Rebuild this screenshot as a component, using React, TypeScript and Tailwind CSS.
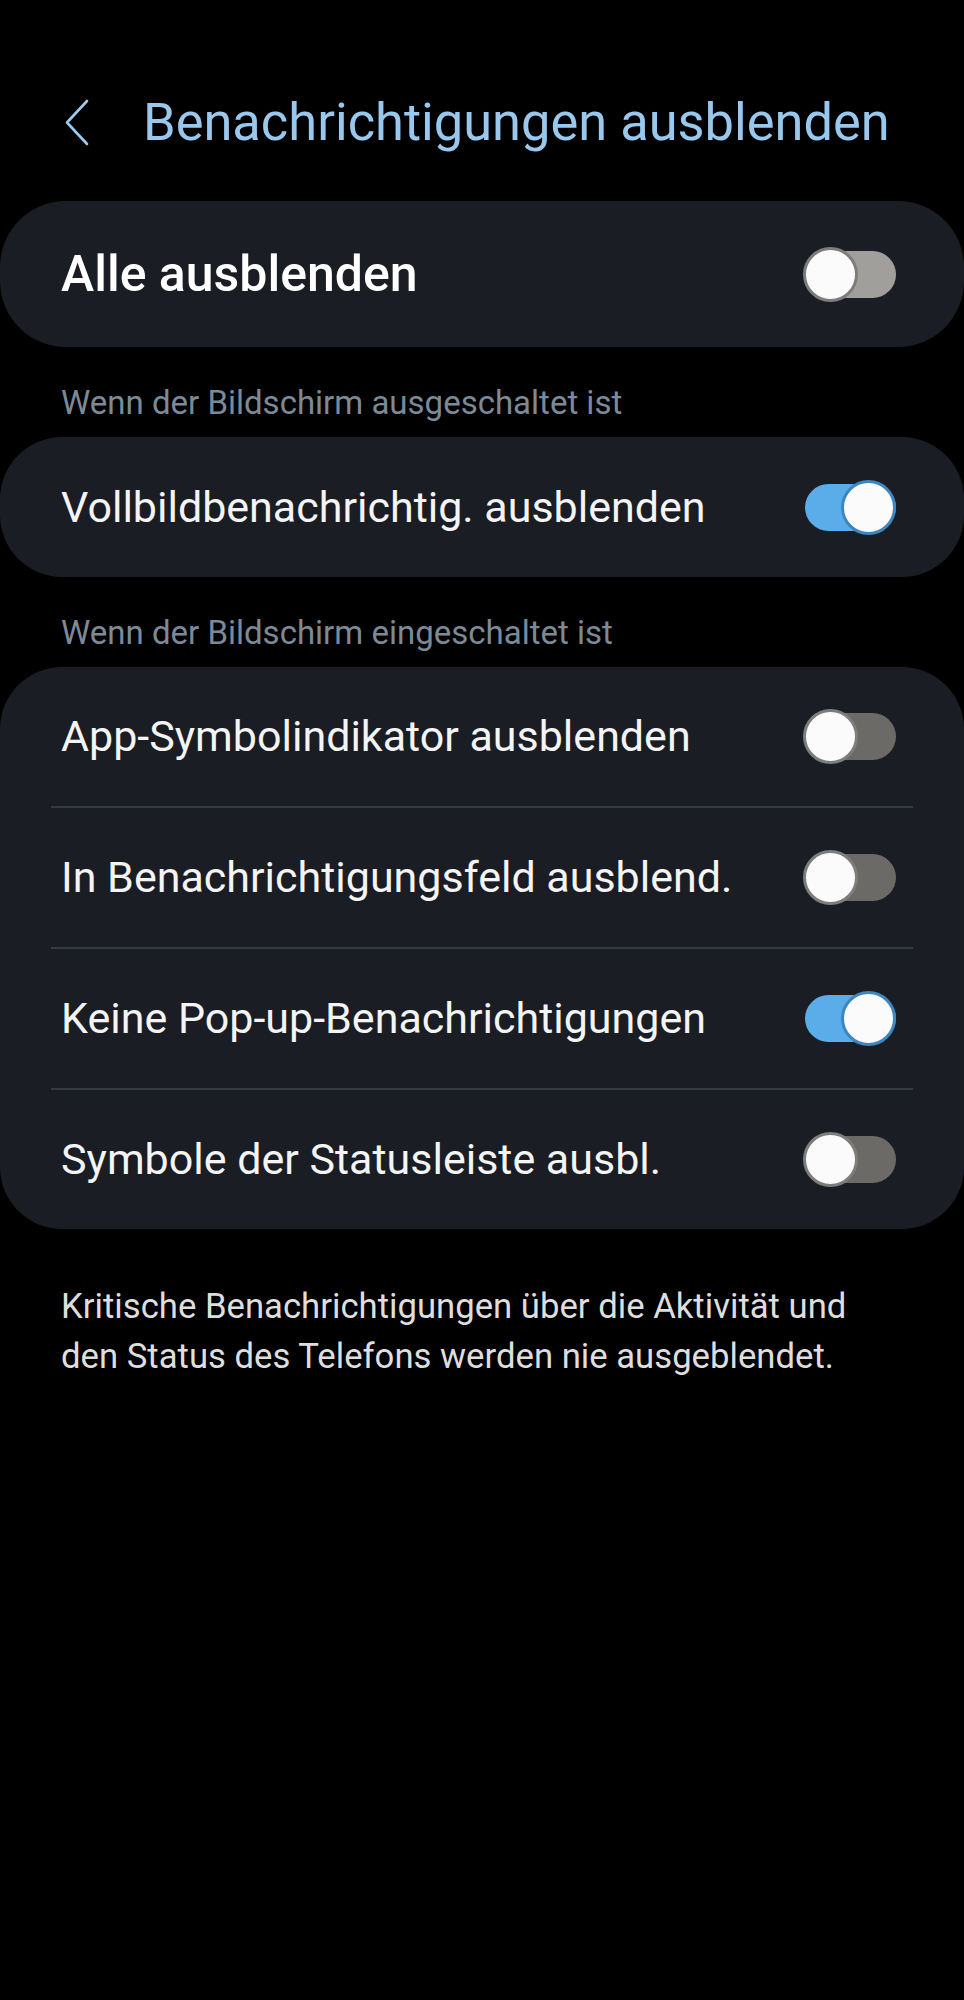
import React from 'react'

interface ToggleProps {
  on: boolean
  trackOff?: string
}

function Toggle({ on, trackOff = 'bg-[#6b6a66]' }: ToggleProps) {
  return (
    <div className="relative w-[93px] h-[55px] flex-shrink-0">
      <div
        className={`absolute left-[2px] right-0 top-[4px] h-[47px] rounded-full ${on ? 'bg-[#5aade8]' : trackOff}`}
      />
      <div
        className={`absolute top-0 w-[55px] h-[55px] rounded-full bg-[#fbfbfb] border-[3px] ${
          on ? 'right-0 border-[#3d86c0]' : 'left-0 border-[#7d7d7d]'
        }`}
      />
    </div>
  )
}

const rows = [
  { label: 'App-Symbolindikator ausblenden', on: false },
  { label: 'In Benachrichtigungsfeld ausblend.', on: false },
  { label: 'Keine Pop-up-Benachrichtigungen', on: true },
  { label: 'Symbole der Statusleiste ausbl.', on: false },
]

export default function App() {
  return (
    <div
      className="w-[964px] min-h-[2000px] bg-black text-[#f4f4f4]"
      style={{ fontFamily: 'Roboto, "Noto Sans", sans-serif' }}
    >
      {/* Header */}
      <div className="flex items-center pt-[96px] pl-[64px] gap-[53px]">
        <svg width="26" height="47" viewBox="0 0 26 47" fill="none" className="flex-shrink-0">
          <polyline
            points="23,2 3,23.5 23,45"
            stroke="#9ccaee"
            strokeWidth="2.6"
            strokeLinecap="round"
            strokeLinejoin="round"
          />
        </svg>
        <h1 className="text-[52.4px] leading-[52px] text-[#98c8ee] font-normal">
          Benachrichtigungen ausblenden
        </h1>
      </div>

      {/* Master switch */}
      <div className="mt-[53px] h-[146px] rounded-[66px] bg-[#1a1d23] flex items-center justify-between pl-[61px] pr-[68px]">
        <span className="text-[50px] leading-[50px] font-medium text-white">Alle ausblenden</span>
        <Toggle on={false} trackOff="bg-[#a09f9c]" />
      </div>

      <p className="pt-[39px] pb-[18px] pl-[61px] text-[33px] leading-[33px] text-[#7c8a98]">
        Wenn der Bildschirm ausgeschaltet ist
      </p>

      <div className="h-[140px] rounded-[62px] bg-[#1a1d23] flex items-center justify-between pl-[61px] pr-[68px]">
        <span className="text-[43px] leading-[43px]">Vollbildbenachrichtig. ausblenden</span>
        <Toggle on={true} />
      </div>

      <p className="pt-[39px] pb-[18px] pl-[61px] text-[33px] leading-[33px] text-[#7c8a98]">
        Wenn der Bildschirm eingeschaltet ist
      </p>

      <div className="rounded-[62px] bg-[#1a1d23] flex flex-col">
        {rows.map((row, i) => (
          <div key={row.label}>
            {i > 0 && <div className="mx-[51px] h-[2px] bg-[#363a41]" />}
            <div className="h-[139px] flex items-center justify-between pl-[61px] pr-[68px]">
              <span className="text-[43px] leading-[43px]">{row.label}</span>
              <Toggle on={row.on} />
            </div>
          </div>
        ))}
      </div>

      <p className="mt-[52px] pl-[61px] pr-[60px] text-[34.7px] leading-[50px] text-[#dedede]">
        Kritische Benachrichtigungen über die Aktivität und den Status des Telefons werden nie ausgeblendet.
      </p>
    </div>
  )
}
